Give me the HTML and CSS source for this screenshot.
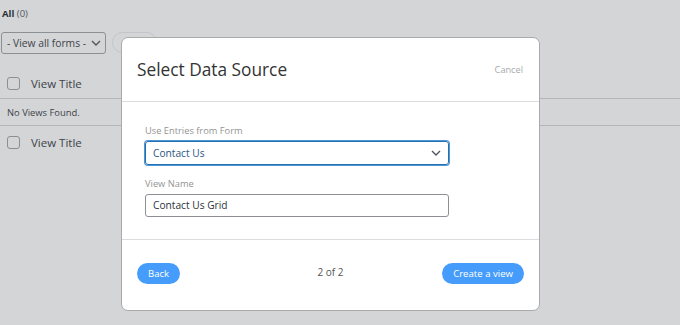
FILE: index.html
```html
<!DOCTYPE html>
<html lang="en">
<head>
    <meta charset="UTF-8">
    <title>Views</title>
    <link rel="stylesheet" href="styles.css">
</head>
<body>

    <div class="page">
        <div class="filters">
            <b>All</b> <span class="count">(0)</span>
        </div>
        <div class="toolbar">
            <div class="form-filter">
                <span>- View all forms -</span>
                <svg width="10" height="6" viewBox="0 0 10 6"><path d="M1 1l4 4 4-4" fill="none" stroke="#50575e" stroke-width="1.4"/></svg>
            </div>
            <div class="filter-btn"></div>
        </div>
        <div class="list-row head">
            <span class="check"></span>
            <span>View Title</span>
        </div>
        <div class="list-row empty">No Views Found.</div>
        <div class="list-row foot">
            <span class="check"></span>
            <span>View Title</span>
        </div>
    </div>

    <div class="modal">
        <div class="modal-header">
            <h2 class="modal-title">Select Data Source</h2>
            <a class="cancel" href="#">Cancel</a>
        </div>
        <div class="modal-body">
            <label class="field-label">Use Entries from Form</label>
            <div class="select-box">
                <span>Contact Us</span>
                <svg width="10" height="6" viewBox="0 0 10 6"><path d="M1 1l4 4 4-4" fill="none" stroke="#50575e" stroke-width="1.4"/></svg>
            </div>
            <label class="field-label">View Name</label>
            <div class="text-box">Contact Us Grid</div>
        </div>
        <div class="modal-footer">
            <div class="left"><button class="pill-button">Back</button></div>
            <span class="step">2 of 2</span>
            <div class="right"><button class="pill-button">Create a view</button></div>
        </div>
    </div>

</body>
</html>
```

FILE: styles.css
```css
* {
    margin: 0;
    padding: 0;
    box-sizing: border-box;
}

body {
    font-family: "Open Sans", "Noto Sans", sans-serif;
    background-color: #d4d5d7;
    color: #2c3338;
    width: 680px;
    height: 325px;
    overflow: hidden;
    position: relative;
}

.page {
    padding-top: 5px;
}

.filters {
    font-size: 9.5px;
    padding-left: 2px;
    height: 17px;
    line-height: 17px;
}

    .filters b {
        font-weight: 700;
    }

    .filters .count {
        color: #50575e;
    }

.toolbar {
    display: flex;
    gap: 6px;
    margin-top: 10px;
    padding-left: 1px;
    height: 22px;
}

.form-filter {
    display: flex;
    align-items: center;
    gap: 5px;
    width: 105px;
    height: 22px;
    border: 1px solid #8c8f94;
    border-radius: 3px;
    font-size: 10.3px;
    white-space: nowrap;
    color: #3c434a;
    padding-left: 5px;
}

    .form-filter svg {
        flex-shrink: 0;
    }

.filter-btn {
    width: 45px;
    height: 21px;
    border: 1px solid #c3c4c7;
    border-radius: 11px;
}

.list-row {
    display: flex;
    align-items: center;
    font-size: 11.5px;
    color: #3c434a;
}

    .list-row.head {
        height: 45px;
        padding: 14px 0 0 7px;
        gap: 11px;
        border-bottom: 1px solid #b4b5b8;
    }

    .list-row.empty {
        height: 27px;
        padding-left: 7px;
        font-size: 9.4px;
        border-bottom: 1px solid #b4b5b8;
    }

    .list-row.foot {
        height: 32px;
        padding-left: 7px;
        gap: 11px;
    }

.check {
    width: 13px;
    height: 13px;
    border: 1px solid #8c8f94;
    border-radius: 3px;
}

.modal {
    position: absolute;
    left: 121px;
    top: 37px;
    width: 419px;
    height: 274px;
    background-color: #fff;
    border: 1px solid #a9aaac;
    border-radius: 7px;
    display: flex;
    flex-direction: column;
}

.modal-header {
    display: flex;
    align-items: center;
    justify-content: space-between;
    height: 64px;
    padding: 0 16px 0 15px;
    border-bottom: 1px solid #dcdcde;
}

.modal-title {
    font-size: 17.3px;
    font-weight: 400;
    color: #333;
}

.cancel {
    font-size: 9.2px;
    color: #a7aaad;
    text-decoration: none;
}

.modal-body {
    height: 138px;
    padding: 22px 90px 0 23px;
    border-bottom: 1px solid #dcdcde;
}

.field-label {
    display: block;
    font-size: 9.3px;
    color: #949494;
    line-height: 14px;
    margin-bottom: 3px;
}

.select-box {
    display: flex;
    align-items: center;
    justify-content: space-between;
    height: 24px;
    border: 1px solid #2271b1;
    box-shadow: 0 0 0 1px #4f94d4;
    border-radius: 3px;
    font-size: 10.2px;
    color: #2c5682;
    padding: 0 7px 0 7px;
    margin-bottom: 12px;
}

.text-box {
    height: 23px;
    border: 1px solid #8c8f94;
    border-radius: 3px;
    font-size: 10.2px;
    line-height: 21px;
    color: #2c3338;
    padding-left: 7px;
}

.modal-footer {
    display: grid;
    grid-template-columns: 1fr auto 1fr;
    align-items: center;
    padding: 0 15px 6px 15px;
    flex: 1;
}

    .modal-footer .right {
        text-align: right;
    }

.pill-button {
    font-family: "Open Sans", sans-serif;
    height: 21px;
    padding: 0 11px;
    border: none;
    border-radius: 11px;
    background-color: #459cfa;
    color: #fff;
    font-size: 9.6px;
    cursor: pointer;
}

.step {
    font-size: 10px;
    color: #555;
}
```
